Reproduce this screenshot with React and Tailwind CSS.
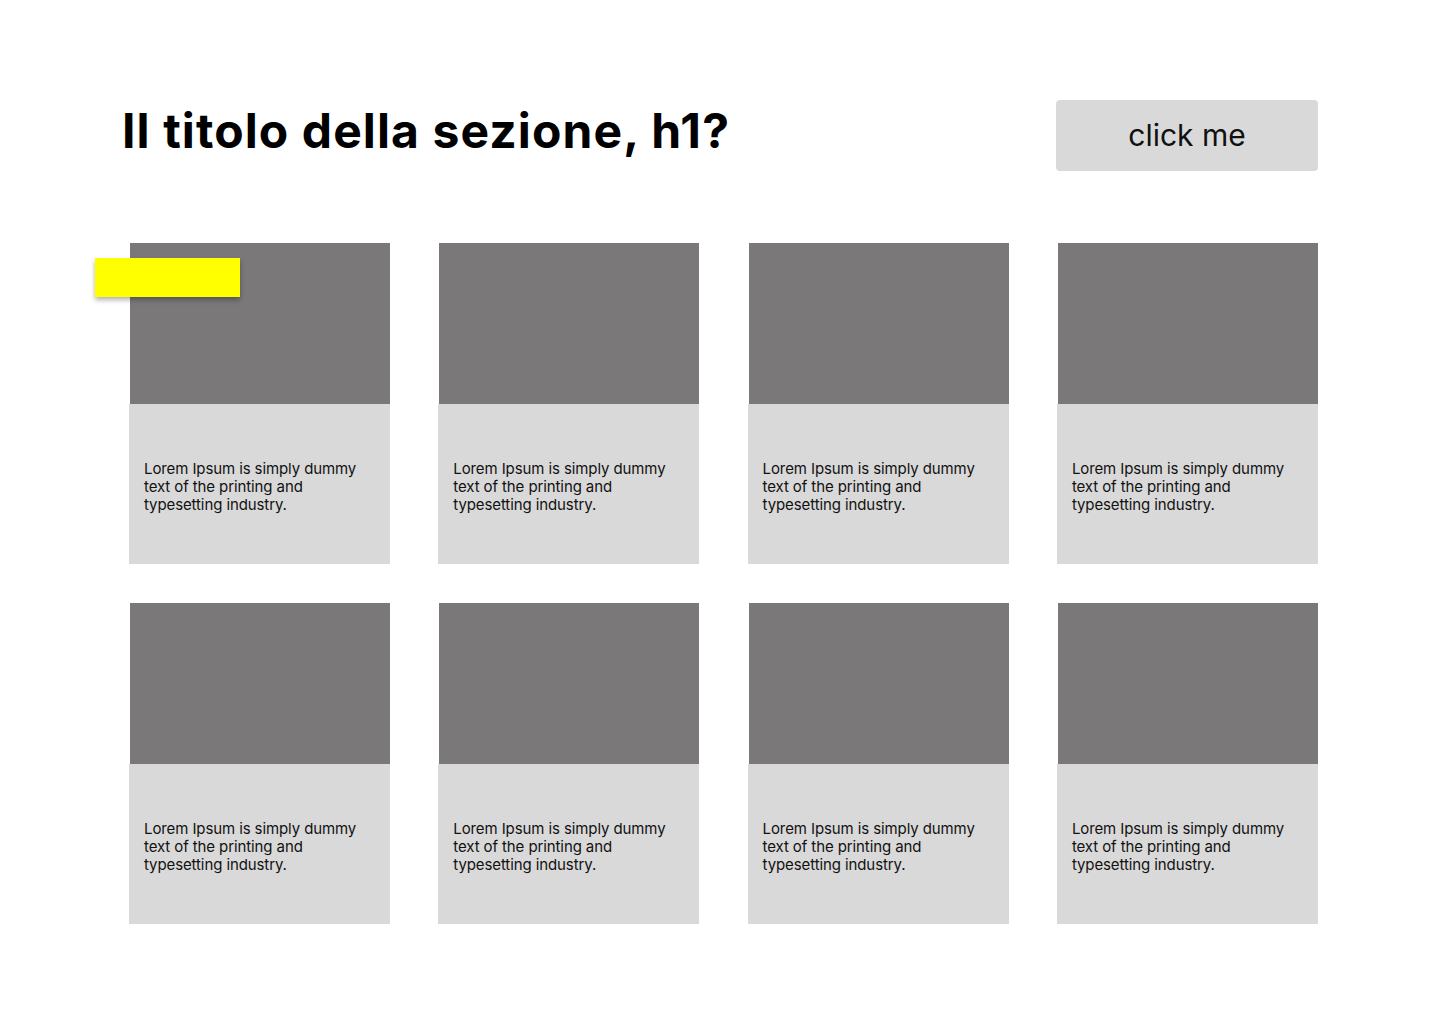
const cards = Array.from({ length: 8 });

const Card = ({ sticker }) => (
  <div className="relative w-[261px]">
    <div className="ml-px h-[161px] w-[260px] bg-[#7a7878]" />
    <div className="flex h-[160px] items-center bg-[#d9d9d9] px-[15px] pt-[5px]">
      <p className="text-[15px] leading-[18px] tracking-[-0.1px] text-[#111]">
        Lorem Ipsum is simply dummy
        <br />
        text of the printing and
        <br />
        typesetting industry.
      </p>
    </div>
    {sticker && (
      <div className="absolute left-[-34px] top-[15px] h-[39px] w-[145px] bg-[#ffff00] shadow-[0_3px_5px_rgba(0,0,0,0.3)]" />
    )}
  </div>
);

const App = () => {
  return (
    <div className="min-h-screen w-[1440px] bg-white font-['Inter','Noto_Sans',sans-serif]">
      <div className="flex items-start justify-between pl-[122px] pr-[122px] pt-[100px]">
        <h1 className="mt-[2px] text-[48px] font-bold leading-[58px] tracking-[1.1px] text-black">
          Il titolo della sezione, h1?
        </h1>
        <button className="flex h-[71px] w-[262px] items-center justify-center rounded-[4px] bg-[#d9d9d9] text-[30px] text-[#111]">
          click me
        </button>
      </div>

      <div className="ml-[129px] mt-[72px] grid w-[1189px] grid-cols-[261px_261px_261px_261px] gap-x-[48.3px] gap-y-[39px]">
        {cards.map((_, i) => (
          <Card key={i} sticker={i === 0} />
        ))}
      </div>
    </div>
  );
};

export default App;
